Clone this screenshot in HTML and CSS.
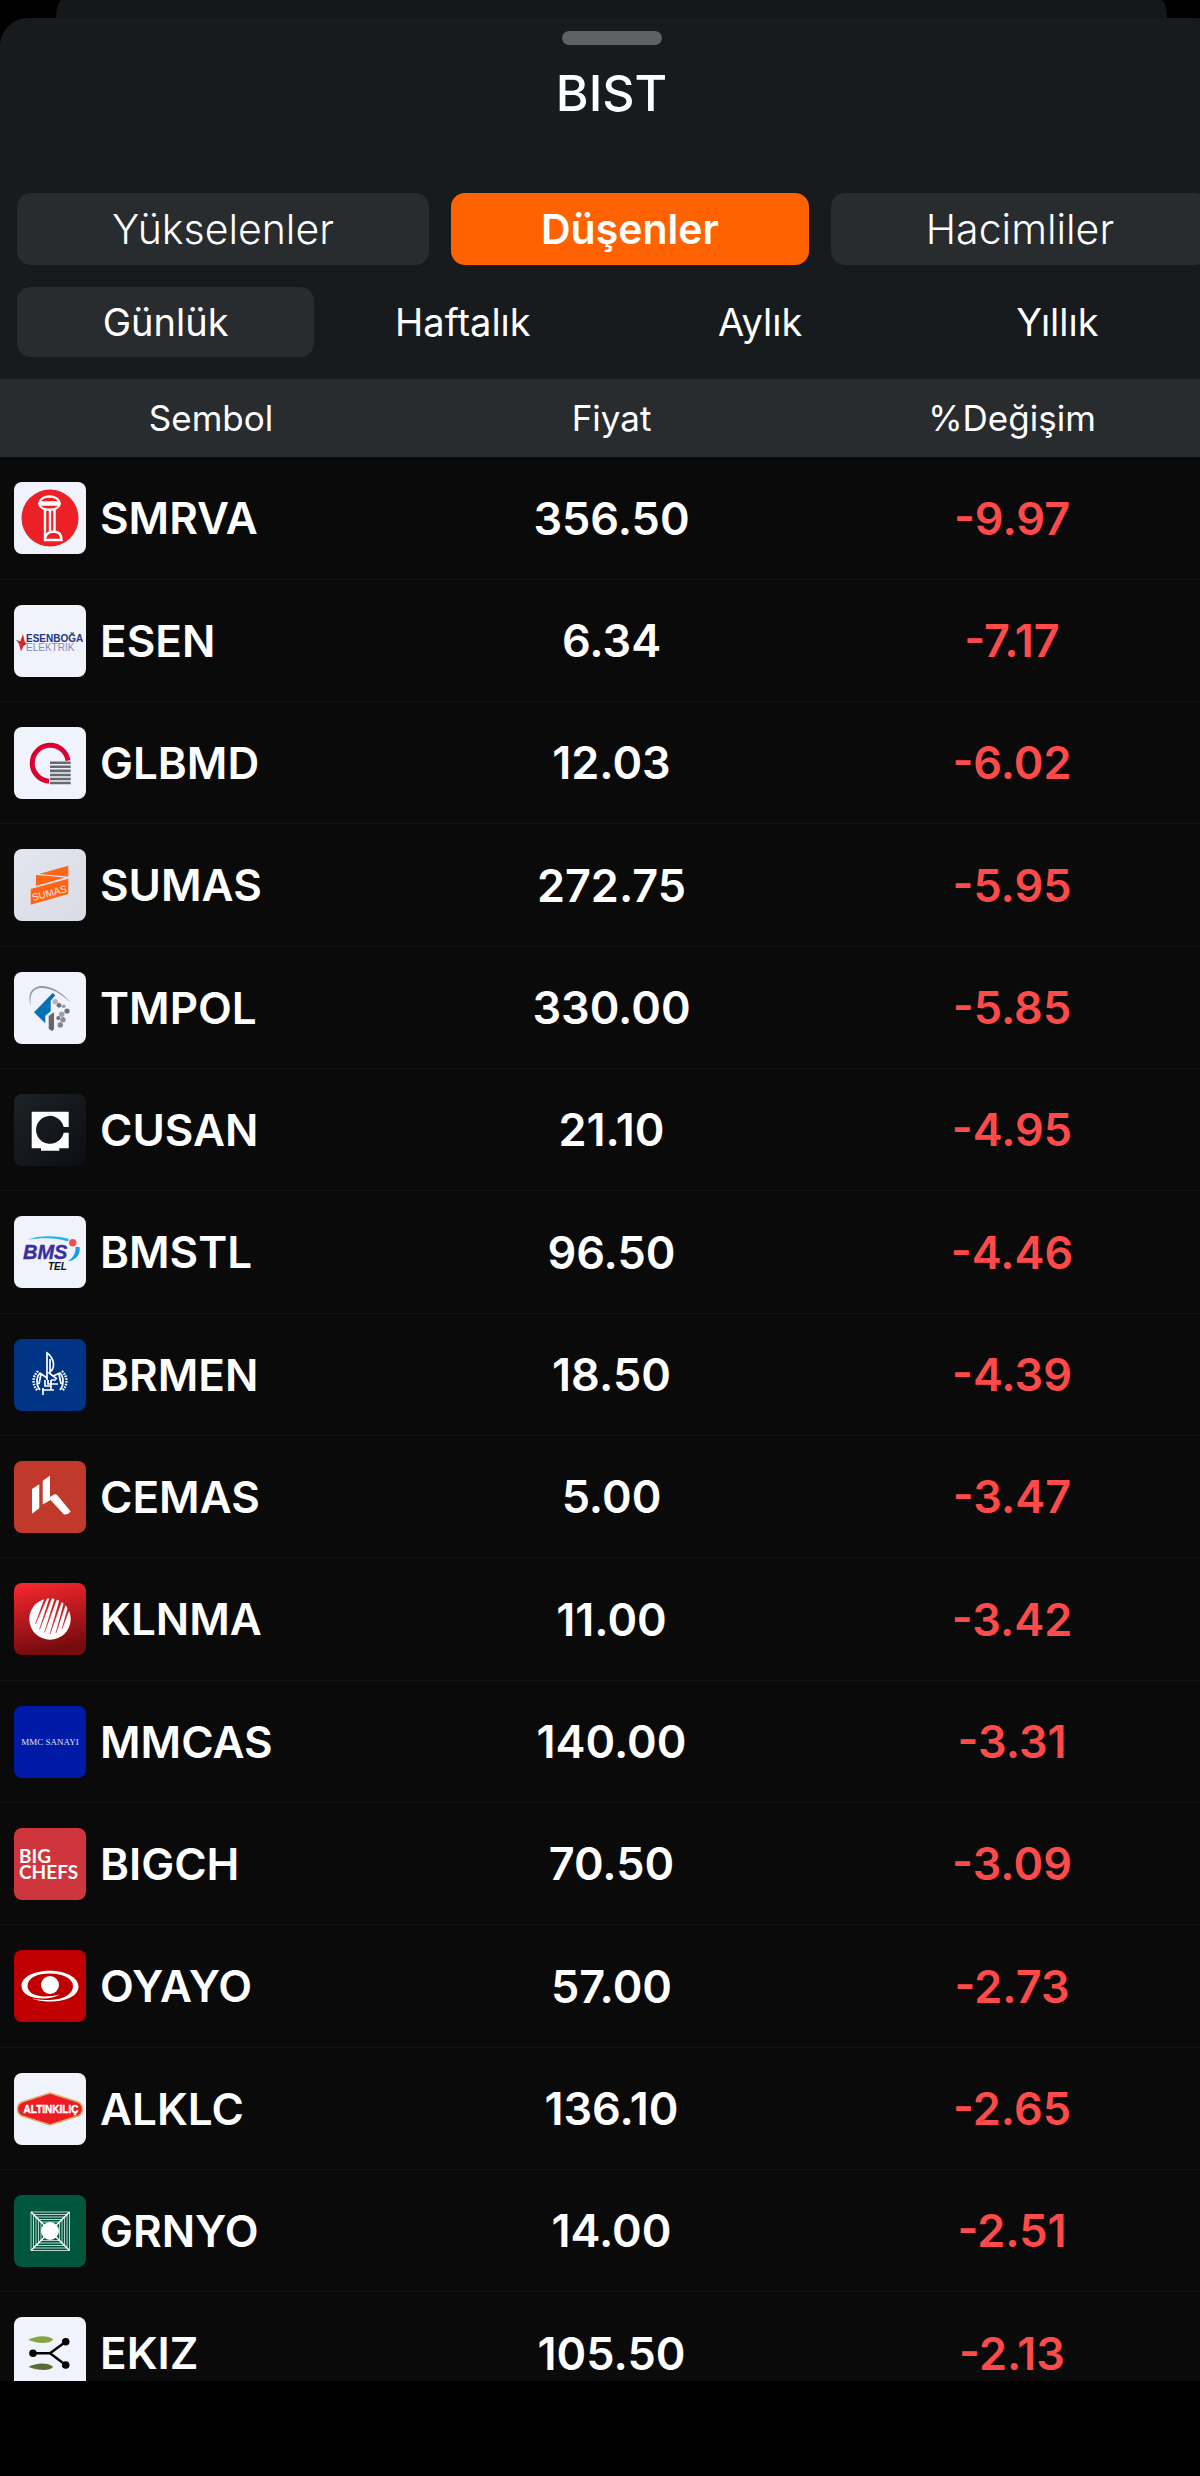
FILE: index.html
```html
<!DOCTYPE html>
<html lang="tr">
<head>
<meta charset="utf-8">
<meta name="viewport" content="width=device-width, initial-scale=1">
<title>BIST</title>
<link rel="stylesheet" href="styles.css">
</head>
<body>
<div class="screen">
  <div class="backdrop"></div>
  <main class="sheet">
    <header class="sheet-head">
      <span class="grabber"></span>
      <h1 class="title">BIST</h1>
    </header>
    <nav class="tabs" aria-label="Liste">
      <button class="tab" type="button">Yükselenler</button>
      <button class="tab is-active" type="button">Düşenler</button>
      <button class="tab" type="button">Hacimliler</button>
    </nav>
    <nav class="periods" aria-label="Dönem">
      <button class="period is-active" type="button">Günlük</button>
      <button class="period" type="button">Haftalık</button>
      <button class="period" type="button">Aylık</button>
      <button class="period" type="button">Yıllık</button>
    </nav>
    <div class="list">
      <table class="stocks">
        <thead>
          <tr><th class="col-side">Sembol</th><th>Fiyat</th><th class="col-side">%Değişim</th></tr>
        </thead>
        <tbody>
          <tr>
            <td><div class="symbol"><svg class="logo" viewBox="0 0 72 72" aria-hidden="true"><rect width="72" height="72" fill="#f0f3fb"/><circle cx="36" cy="36" r="28.5" fill="#ec2127"/><g fill="none" stroke="#fff" stroke-width="2.4"><path d="M25.500 20.500C27 12.500 44 12.500 45.500 20.500ZM25.500 22.500C27 29.500 44 29.500 45.500 22.500Z"/><path d="M31 27V58H47.500C47.500 53 45 50 40.500 49.500V27M36 28V50M31 56C33 50 37 49.500 41 49.500"/></g></svg>SMRVA</div></td>
            <td>356.50</td><td class="change">-9.97</td>
          </tr>
          <tr>
            <td><div class="symbol"><svg class="logo" viewBox="0 0 72 72" aria-hidden="true"><rect width="72" height="72" fill="#f0f3fb"/><path d="M3 36L6 37L9 29L10.500 36L12.500 39L9.500 41L7 46.500L5 39Z" fill="#ed2027"/><path d="M2.500 35.500L7 37L9 40L12.500 38" fill="none" stroke="#555a66" stroke-width="1"/><text class="logo-sans logo-bold" x="12" y="37" font-size="10" fill="#26357c">ESENBOĞA</text><text class="logo-sans" x="12" y="46" font-size="10" fill="#8587b5">ELEKTRİK</text></svg>ESEN</div></td>
            <td>6.34</td><td class="change">-7.17</td>
          </tr>
          <tr>
            <td><div class="symbol"><svg class="logo" viewBox="0 0 72 72" aria-hidden="true"><rect width="72" height="72" fill="#f0f3fb"/><path d="M54 33.500A18 18 0 1 0 35 54.200" fill="none" stroke="#dc0030" stroke-width="5"/><path d="M36 35.700H56.700M36 39.800H56.700M36 43.900H56.700M36 48H56.700M36 52H56.700M36 56H56.700" stroke="#68696e" stroke-width="2.600"/></svg>GLBMD</div></td>
            <td>12.03</td><td class="change">-6.02</td>
          </tr>
          <tr>
            <td><div class="symbol"><svg class="logo" viewBox="0 0 72 72" aria-hidden="true"><defs><linearGradient id="silver" x1="0" y1="0" x2="1" y2="1"><stop offset="0" stop-color="#e4e6ef"/><stop offset="1" stop-color="#d9dbe5"/></linearGradient></defs><rect width="72" height="72" fill="url(#silver)"/><path d="M25 25L54.300 16.700V27.500ZM22 26L51 28.500L22 37ZM16.700 40L54.300 29.700V45L16.700 55.700Z" fill="#ff6417"/><text class="logo-sans" transform="translate(19 52) rotate(-15)" font-size="10" fill="#fbe4dc">SUMAS</text></svg>SUMAS</div></td>
            <td>272.75</td><td class="change">-5.95</td>
          </tr>
          <tr>
            <td><div class="symbol"><svg class="logo" viewBox="0 0 72 72" aria-hidden="true"><rect width="72" height="72" fill="#f0f3fb"/><path d="M17 34C12 20 20 14 28 14C40 14 52 24 56.700 31C48 22 38 16.500 28 16C19 16 15 22 17 34Z" fill="#9a9ca3"/><path d="M20 40.300L38.700 21L41.300 23.300L36.700 28.700V39.300L31.300 43.700V51.300Z" fill="#0870b4"/><path d="M34.700 44L40 40.300V57L38 59.300L34.700 56.700Z" fill="#66676b"/><g fill="#707176"><circle cx="41.300" cy="29.700" r="2.700" fill="#b4b6bb"/><circle cx="45" cy="33.300" r="2.400"/><circle cx="49.700" cy="34.300" r="1.800" fill="#96979c"/><circle cx="53" cy="39" r="2.600"/><circle cx="47.700" cy="42.300" r="2.700" fill="#a0a1a6"/><circle cx="44.300" cy="46" r="2"/><circle cx="49" cy="47.700" r="2.700" fill="#8d8e93"/><circle cx="46.300" cy="53" r="2.700" fill="#86878c"/></g></svg>TMPOL</div></td>
            <td>330.00</td><td class="change">-5.85</td>
          </tr>
          <tr>
            <td><div class="symbol"><svg class="logo" viewBox="0 0 72 72" aria-hidden="true"><defs><linearGradient id="night" x1="0" y1="0" x2="1" y2="1"><stop offset="0" stop-color="#1d2225"/><stop offset="1" stop-color="#0c0e13"/></linearGradient></defs><rect width="72" height="72" fill="url(#night)"/><path d="M17.700 17.700H54.700V33H49.700A14 14 0 1 0 49.700 38.700H54.700V54.300H45.300V56.700H27V54.300H17.700Z" fill="#fff"/></svg>CUSAN</div></td>
            <td>21.10</td><td class="change">-4.95</td>
          </tr>
          <tr>
            <td><div class="symbol"><svg class="logo" viewBox="0 0 72 72" aria-hidden="true"><rect width="72" height="72" fill="#f0f3fb"/><path d="M13.300 23.700C25 19 44 19.500 55 23L54 25.500C42 21.500 28 21.500 13.300 23.700Z" fill="#25b3ee"/><path d="M61.500 31L65.500 31C67 38 62 44.500 53.700 45.300C59 42 62 37 61.500 31Z" fill="#169fe0"/><circle cx="58.700" cy="26.700" r="3.700" fill="#f0504c"/><text class="logo-sans logo-heavy logo-slant" x="9" y="43" font-size="20" fill="#3a2f9e" stroke="#3a2f9e">BMS</text><text class="logo-sans logo-bold logo-slant" x="34" y="54" font-size="10" fill="#111">TEL</text></svg>BMSTL</div></td>
            <td>96.50</td><td class="change">-4.46</td>
          </tr>
          <tr>
            <td><div class="symbol"><svg class="logo" viewBox="0 0 72 72" aria-hidden="true"><rect width="72" height="72" fill="#003585"/><g fill="none" stroke="#fff" stroke-width="1.700"><path d="M33 41V14C39 18 42 27 37 32L35 34L43 40M36 20V34"/><path d="M33 39L26 34C22 38 22 46 26 51M27 35L25 45M39 37L46 34C50 38 50 46 46 51M45 35L47 45"/><path d="M24 32C18 38 18 46 24 52M48 32C54 38 54 46 48 52" stroke-width="2.400" stroke-dasharray="1.600 1.200"/><path d="M31 41V47H37M29 49V56M28 51H40M34 41V45H44M37 41V51M37 41H42"/></g></svg>BRMEN</div></td>
            <td>18.50</td><td class="change">-4.39</td>
          </tr>
          <tr>
            <td><div class="symbol"><svg class="logo" viewBox="0 0 72 72" aria-hidden="true"><rect width="72" height="72" fill="#c0392b"/><path d="M18 28L25.300 23.300V47.300L18 52.700ZM28.700 19.700L36 14.700V36L40 33.500Q42.500 32.500 44 35L56.700 50.500Q54 54 50 53.500L36.500 39L28.700 43.500Z" fill="#fff"/></svg>CEMAS</div></td>
            <td>5.00</td><td class="change">-3.47</td>
          </tr>
          <tr>
            <td><div class="symbol"><svg class="logo" viewBox="0 0 72 72" aria-hidden="true"><defs><linearGradient id="ember" x1="0" y1="0" x2="0.200" y2="1"><stop offset="0" stop-color="#fa2830"/><stop offset="1" stop-color="#760b0d"/></linearGradient></defs><rect width="72" height="72" fill="url(#ember)"/><circle cx="36" cy="36" r="20.700" fill="#fff"/><path d="M30.700 15L33 15L21.500 41ZM35.700 14.500L38 14.500L25.500 46.500ZM41 15L43 15.500L30.500 49.500ZM45.700 16.500L48 17.500L36 51ZM50 19.500L51.800 21L42 50ZM54 24L55.500 26.500L48 46Z" fill="#c51d23" stroke="#c51d23" stroke-width="0.400"/></svg>KLNMA</div></td>
            <td>11.00</td><td class="change">-3.42</td>
          </tr>
          <tr>
            <td><div class="symbol"><svg class="logo" viewBox="0 0 72 72" aria-hidden="true"><rect width="72" height="72" fill="#001aa8"/><text class="logo-serif" x="36" y="39" font-size="9" text-anchor="middle" fill="#dfe3f5">MMC SANAYI</text></svg>MMCAS</div></td>
            <td>140.00</td><td class="change">-3.31</td>
          </tr>
          <tr>
            <td><div class="symbol"><svg class="logo" viewBox="0 0 72 72" aria-hidden="true"><rect width="72" height="72" fill="#cf353d"/><text class="logo-lato logo-bold" font-size="19" fill="#fff"><tspan x="5" y="35">BIG</tspan><tspan x="5" y="51">CHEFS</tspan></text></svg>BIGCH</div></td>
            <td>70.50</td><td class="change">-3.09</td>
          </tr>
          <tr>
            <td><div class="symbol"><svg class="logo" viewBox="0 0 72 72" aria-hidden="true"><rect width="72" height="72" fill="#c00000"/><path d="M36 20.700C52 20.700 64.500 27.500 64.500 36.500C64.500 46 52 51.500 36 51.500C29 51.500 22 50.500 18 48.500C24 49.500 29 50 36 50C50 49.500 59 44 59 36C59 28.500 49 23.500 36 23.500C23 23.500 13.500 28 13.500 36C13.500 43 22 46.500 31 46.500C36 46.500 41 45.500 46 44.500C41 47 36 48.500 29 48.500C17 48.500 7.500 44 7.500 36C7.500 27 20 20.700 36 20.700Z" fill="#fff"/><circle cx="36" cy="35" r="9" fill="#fff"/></svg>OYAYO</div></td>
            <td>57.00</td><td class="change">-2.73</td>
          </tr>
          <tr>
            <td><div class="symbol"><svg class="logo" viewBox="0 0 72 72" aria-hidden="true"><rect width="72" height="72" fill="#f0f3fb"/><path d="M36 20L64 29Q68.500 31 68.500 36Q68.500 41 64 43L36 52L8 43Q3.500 41 3.500 36Q3.500 31 8 29Z" fill="#ed1c24" stroke="#d8b26a" stroke-width="1.500"/><text class="logo-sans logo-heavy" x="37" y="40" font-size="10" text-anchor="middle" fill="#fff" stroke="#fff">ALTINKILIÇ</text></svg>ALKLC</div></td>
            <td>136.10</td><td class="change">-2.65</td>
          </tr>
          <tr>
            <td><div class="symbol"><svg class="logo" viewBox="0 0 72 72" aria-hidden="true"><rect width="72" height="72" fill="#00573d"/><g fill="none" stroke="#b9d3ca" stroke-width="1"><path d="M17 17H55.500V55.500H17ZM19.500 19.500H53V53H19.500ZM22 22H50.500V50.500H22ZM24.500 24.500H48V48H24.500ZM27 27H45.500V45.500H27Z"/><path d="M17 17L55.500 55.500M55.500 17L17 55.500" stroke="#fff" stroke-width="1.500"/></g><circle cx="36" cy="36" r="9" fill="#fff"/></svg>GRNYO</div></td>
            <td>14.00</td><td class="change">-2.51</td>
          </tr>
          <tr>
            <td><div class="symbol"><svg class="logo" viewBox="0 0 72 72" aria-hidden="true"><rect width="72" height="72" fill="#f0f3fb"/><path d="M14.500 23C22 18.500 34 18 39.300 22.500C35 27.500 24 26.500 14.500 23Z" fill="#84a63f"/><path d="M14.500 50C22 45.500 34 45 39.300 50C35 54.500 24 53.500 14.500 50Z" fill="#596d31"/><path d="M19 36.300H36L51.700 24.700M36 36.300L51.700 48" fill="none" stroke="#000" stroke-width="2.400"/><circle cx="19" cy="36.300" r="3.800"/><circle cx="51.700" cy="24.700" r="3.800"/><circle cx="51.700" cy="48" r="3.800"/></svg>EKIZ</div></td>
            <td>105.50</td><td class="change">-2.13</td>
          </tr>
        </tbody>
      </table>
    </div>
  </main>
</div>
</body>
</html>
```
FILE: styles.css
```css
* {
  box-sizing: border-box;
}

body {
  margin: 0;
  background: #000;
  color: #fff;
  font-family: Inter, "Liberation Sans", sans-serif;
}

/* The sheet runs slightly past the right edge of the window. */
.screen {
  display: flex;
  flex-direction: column;
  height: 100vh;
  padding-bottom: 95px;
  overflow: hidden;
}

.backdrop {
  flex: none;
  height: 18px;
  margin: 0 33px 0 56px;
  border-radius: 6px 6px 0 0 / 18px 18px 0 0;
  background: #141819;
}

.sheet {
  display: flex;
  flex: 1;
  flex-direction: column;
  min-height: 0;
  margin-right: -23px;
  border-radius: 28px 28px 0 0;
  background: #171b1e;
  overflow: hidden;
}

.sheet-head {
  display: flex;
  flex-direction: column;
  align-items: center;
  gap: 16px;
  padding: 13px 0 67px;
}

.grabber {
  width: 100px;
  height: 14px;
  border-radius: 7px;
  background: #5f6165;
}

.title {
  margin: 0;
  font-size: 50px;
  font-weight: 500;
  line-height: 65px;
}

.tabs {
  display: flex;
  flex: none;
  gap: 22px;
  padding: 0 17px;
}

.tab,
.period {
  border: 0;
  border-radius: 14px;
  background: none;
  color: #fff;
  font-family: inherit;
  white-space: nowrap;
}

.tab {
  height: 72px;
  padding: 0 95px;
  background: #292c2f;
  font-size: 41px;
  font-weight: 300;
}

.tab.is-active {
  padding: 0 90px;
  background: #ff6200;
  font-weight: 600;
}

.periods {
  display: grid;
  flex: none;
  grid-template-columns: repeat(4, 1fr);
  padding: 22px 17px;
}

.period {
  height: 70px;
  padding: 0;
  font-size: 38px;
  font-weight: 400;
}

.period.is-active {
  background: #292c2f;
}

.list {
  flex: 1;
  min-height: 0;
  background: #0a0a0a;
  overflow: hidden;
}

.stocks {
  width: 100%;
  border-spacing: 0;
  table-layout: fixed;
}

.stocks th,
.stocks td {
  padding: 0;
  text-align: center;
}

.stocks th {
  height: 78px;
  background: #292c2f;
  font-size: 35px;
  font-weight: 400;
}

.stocks .col-side {
  width: 411px;
}

.stocks th:first-child {
  padding-left: 11px;
}

.stocks th:last-child,
.stocks td:last-child {
  padding-right: 11px;
}

.stocks td {
  height: 122px;
  border-bottom: 1px solid #131515;
  font-size: 45px;
  font-weight: 600;
}

.stocks tr:nth-child(3n+1) td {
  height: 123px;
}

.stocks .change {
  color: #ff4a4a;
}

.symbol {
  display: flex;
  align-items: center;
  gap: 14px;
  padding-left: 14px;
  font-size: 44px;
}

.logo {
  flex: none;
  width: 72px;
  height: 72px;
  border-radius: 8px;
}

.logo-sans {
  font-family: "Liberation Sans", sans-serif;
  font-weight: 400;
}

.logo-serif {
  font-family: "Liberation Serif", serif;
  font-weight: 400;
}

.logo-lato {
  font-family: Lato, sans-serif;
}

.logo-bold {
  font-weight: 700;
}

.logo-heavy {
  font-weight: 700;
  stroke-width: 0.4;
}

.logo-slant {
  font-style: italic;
}
```
